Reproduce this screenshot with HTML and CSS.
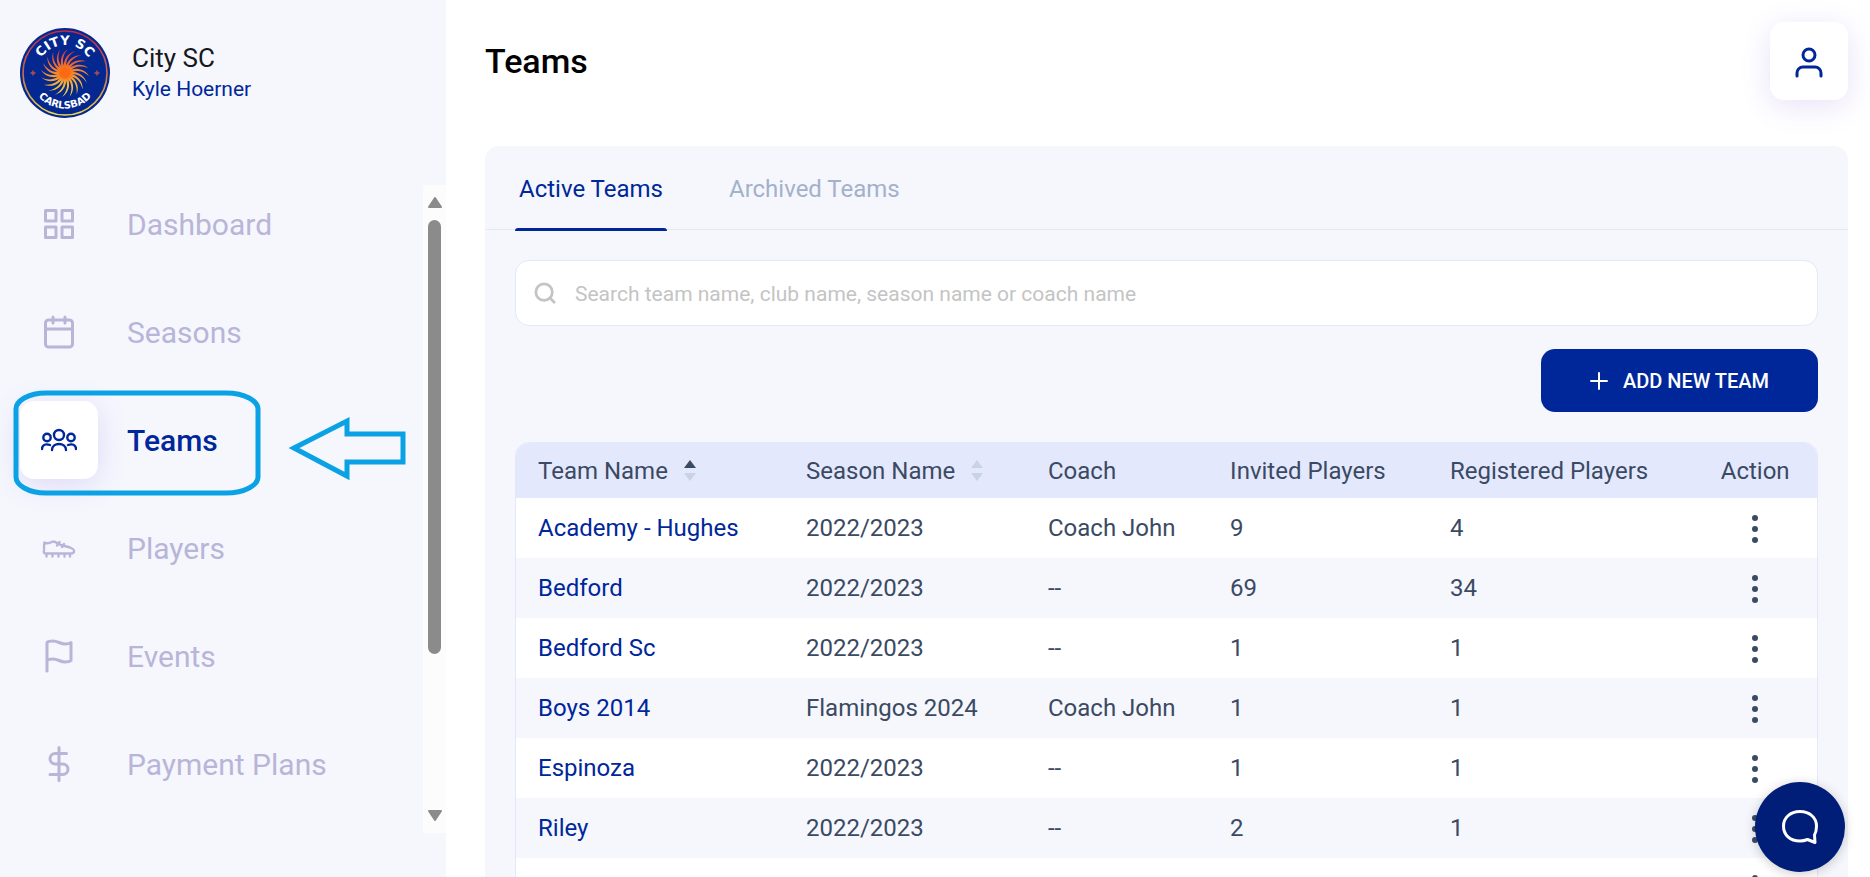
FILE: index.html
```html
<!DOCTYPE html>
<html lang="en">
<head>
    <meta charset="UTF-8">
    <meta name="viewport" content="width=device-width, initial-scale=1.0">
    <title>Teams</title>
    <link rel="stylesheet" href="styles.css">
</head>
<body>

<!-- Sidebar -->
<aside class="sidebar">
    <div class="club">
        <svg class="club-logo" viewBox="0 0 90 90" aria-hidden="true">
            <defs>
                <linearGradient id="ringColor" x1="0" y1="0" x2="0" y2="1">
                    <stop offset="0" stop-color="#c4283f"/>
                    <stop offset="0.5" stop-color="#cf6a4a"/>
                    <stop offset="1" stop-color="#f0dc45"/>
                </linearGradient>
                <linearGradient id="sunColor" x1="0" y1="0" x2="0" y2="1">
                    <stop offset="0" stop-color="#d8303f"/>
                    <stop offset="0.5" stop-color="#f58a2c"/>
                    <stop offset="1" stop-color="#f7e23e"/>
                </linearGradient>
                <radialGradient id="coreColor">
                    <stop offset="0" stop-color="#fb6a12"/>
                    <stop offset="0.5" stop-color="#fb6a12"/>
                    <stop offset="1" stop-color="#fb7a1c" stop-opacity="0"/>
                </radialGradient>
                <path id="ray" d="M-1.500 -2C-6 -9 -5 -19 3 -24C-2.500 -18 -4 -10 1 -4Z"/>
                <path id="topArc" d="M17 45A28 28 0 0 1 73 45"/>
                <path id="bottomArc" d="M9.500 45A35.500 35.500 0 0 0 80.500 45"/>
                <mask id="sunMask">
                    <g fill="#fff" transform="translate(45 45)">
                        <circle r="5"/>
                        <use href="#ray"/>
                        <use href="#ray" transform="rotate(18)"/>
                        <use href="#ray" transform="rotate(36)"/>
                        <use href="#ray" transform="rotate(54)"/>
                        <use href="#ray" transform="rotate(72)"/>
                        <use href="#ray" transform="rotate(90)"/>
                        <use href="#ray" transform="rotate(108)"/>
                        <use href="#ray" transform="rotate(126)"/>
                        <use href="#ray" transform="rotate(144)"/>
                        <use href="#ray" transform="rotate(162)"/>
                        <use href="#ray" transform="rotate(180)"/>
                        <use href="#ray" transform="rotate(198)"/>
                        <use href="#ray" transform="rotate(216)"/>
                        <use href="#ray" transform="rotate(234)"/>
                        <use href="#ray" transform="rotate(252)"/>
                        <use href="#ray" transform="rotate(270)"/>
                        <use href="#ray" transform="rotate(288)"/>
                        <use href="#ray" transform="rotate(306)"/>
                        <use href="#ray" transform="rotate(324)"/>
                        <use href="#ray" transform="rotate(342)"/>
                    </g>
                </mask>
            </defs>
            <circle cx="45" cy="45" r="45" fill="#04288f"/>
            <circle cx="45" cy="45" r="42" fill="none" stroke="url(#ringColor)" stroke-width="1.6"/>
            <rect x="21" y="21" width="48" height="48" fill="url(#sunColor)" mask="url(#sunMask)"/>
            <circle cx="45" cy="45" r="9" fill="url(#coreColor)"/>
            <path d="M13 42.500V47.500M10.500 45H15.500M77 42.500V47.500M74.500 45H79.500" stroke="#b4504f" stroke-width="1.400"/>
            <text class="logo-top"><textPath href="#topArc" startOffset="50%">CITY SC</textPath></text>
            <text class="logo-bottom"><textPath href="#bottomArc" startOffset="50%">CARLSBAD</textPath></text>
        </svg>
        <div>
            <div class="club-name">City SC</div>
            <div class="club-user">Kyle Hoerner</div>
        </div>
    </div>

    <div class="nav-wrap">
        <nav class="nav">
            <a href="#" class="nav-item">
                <span class="nav-icon">
                    <svg class="icon" viewBox="0 0 24 24"><rect x="3" y="3" width="7" height="7"/><rect x="14" y="3" width="7" height="7"/><rect x="14" y="14" width="7" height="7"/><rect x="3" y="14" width="7" height="7"/></svg>
                </span>
                Dashboard
            </a>
            <a href="#" class="nav-item">
                <span class="nav-icon">
                    <svg class="icon" viewBox="0 0 24 24"><rect x="3" y="4" width="18" height="18" rx="2"/><path d="M16 2v4M8 2v4M3 10h18"/></svg>
                </span>
                Seasons
            </a>
            <a href="#" class="nav-item active">
                <span class="nav-icon">
                    <svg class="icon icon-teams" viewBox="0 0 36 36"><circle cx="18" cy="13" r="5"/><circle cx="6" cy="15.500" r="3.700"/><circle cx="30" cy="15.500" r="3.700"/><path d="M11 28C11 20 25 20 25 28M1 27C1 22.500 5 21.500 9 23M35 27C35 22.500 31 21.500 27 23"/></svg>
                </span>
                Teams
                <svg class="callout" viewBox="0 0 394 106" aria-hidden="true"><path d="M33 3H213C232 3 245 11 245 19V87C245 95 232 103 213 103H33C15 103 3 95 3 87V19C3 11 15 3 33 3Z"/><path d="M281 58L334 31V44H390V72H334V86Z"/></svg>
            </a>
            <a href="#" class="nav-item">
                <span class="nav-icon">
                    <svg class="icon icon-boot" viewBox="0 0 36 36"><path d="M3.500 12.500C6 14.500 9 13 12 11.500C15 11.500 17 14 20 15L29 17.500C33 19 33.500 20 33 22C32 23.500 31 23.500 30 23.500H5C3 23.500 2.500 23 3 20C3.300 17.500 2.500 15 3.500 12.500ZM5.500 24V26.500M11.500 24V26.500M17.500 24V26.500M23.500 24V26.500M29 24V26.500M16 15.500L18.500 12M21 17L23 14"/></svg>
                </span>
                Players
            </a>
            <a href="#" class="nav-item">
                <span class="nav-icon">
                    <svg class="icon" viewBox="0 0 24 24"><path d="M4 15s1-1 4-1 5 2 8 2 4-1 4-1V3s-1 1-4 1-5-2-8-2-4 1-4 1zM4 22v-7"/></svg>
                </span>
                Events
            </a>
            <a href="#" class="nav-item">
                <span class="nav-icon">
                    <svg class="icon" viewBox="0 0 24 24"><path d="M12 1v22M17 5H9.500a3.500 3.500 0 0 0 0 7h5a3.500 3.500 0 0 1 0 7H6"/></svg>
                </span>
                Payment Plans
            </a>
        </nav>
        <div class="scrollbar">
            <svg class="scroll-arrow" viewBox="0 0 14 11"><path d="M7 1L13 10H1Z"/></svg>
            <div class="scroll-thumb"></div>
            <svg class="scroll-arrow" viewBox="0 0 14 11"><path d="M7 10L1 1H13Z"/></svg>
        </div>
    </div>
</aside>

<!-- Main content -->
<main class="main">
    <header class="topbar">
        <h1>Teams</h1>
        <button class="btn-profile" aria-label="Profile">
            <svg class="icon" viewBox="0 0 24 24"><path d="M20 22v-2a4 4 0 0 0-4-4H8a4 4 0 0 0-4 4v2"/><circle cx="12" cy="8" r="4"/></svg>
        </button>
    </header>

    <section class="panel">
        <div class="tabs">
            <button class="tab active">Active Teams</button>
            <button class="tab">Archived Teams</button>
        </div>

        <div class="panel-body">
            <div class="search">
                <svg class="icon-search" viewBox="0 0 24 24"><circle cx="11" cy="11" r="9"/><path d="M17.500 17.500L22 22"/></svg>
                <input type="text" aria-label="Search teams" placeholder="Search team name, club name, season name or coach name">
            </div>

            <button class="btn-add">
                <svg class="icon-plus" viewBox="0 0 18 18"><path d="M9 1V17M1 9H17"/></svg>
                ADD NEW TEAM
            </button>

            <table class="teams">
                <colgroup>
                    <col class="col-team">
                    <col class="col-season">
                    <col class="col-coach">
                    <col class="col-invited">
                    <col class="col-registered">
                    <col class="col-action">
                </colgroup>
                <thead>
                    <tr>
                        <th><span class="sortable">Team Name <svg class="sort sort-asc" viewBox="0 0 12 21"><path class="up" d="M6 0L12 8H0Z"/><path d="M6 21L0 13H12Z"/></svg></span></th>
                        <th><span class="sortable">Season Name <svg class="sort" viewBox="0 0 12 21"><path class="up" d="M6 0L12 8H0Z"/><path d="M6 21L0 13H12Z"/></svg></span></th>
                        <th>Coach</th>
                        <th>Invited Players</th>
                        <th>Registered Players</th>
                        <th class="action">Action</th>
                    </tr>
                </thead>
                <tbody>
                    <tr>
                        <td><a href="#">Academy - Hughes</a></td>
                        <td>2022/2023</td>
                        <td>Coach John</td>
                        <td>9</td>
                        <td>4</td>
                        <td class="action"><button class="btn-more" aria-label="More"><svg viewBox="0 0 6 28"><circle cx="3" cy="3" r="3"/><circle cx="3" cy="14" r="3"/><circle cx="3" cy="25" r="3"/></svg></button></td>
                    </tr>
                    <tr>
                        <td><a href="#">Bedford</a></td>
                        <td>2022/2023</td>
                        <td>--</td>
                        <td>69</td>
                        <td>34</td>
                        <td class="action"><button class="btn-more" aria-label="More"><svg viewBox="0 0 6 28"><circle cx="3" cy="3" r="3"/><circle cx="3" cy="14" r="3"/><circle cx="3" cy="25" r="3"/></svg></button></td>
                    </tr>
                    <tr>
                        <td><a href="#">Bedford Sc</a></td>
                        <td>2022/2023</td>
                        <td>--</td>
                        <td>1</td>
                        <td>1</td>
                        <td class="action"><button class="btn-more" aria-label="More"><svg viewBox="0 0 6 28"><circle cx="3" cy="3" r="3"/><circle cx="3" cy="14" r="3"/><circle cx="3" cy="25" r="3"/></svg></button></td>
                    </tr>
                    <tr>
                        <td><a href="#">Boys 2014</a></td>
                        <td>Flamingos 2024</td>
                        <td>Coach John</td>
                        <td>1</td>
                        <td>1</td>
                        <td class="action"><button class="btn-more" aria-label="More"><svg viewBox="0 0 6 28"><circle cx="3" cy="3" r="3"/><circle cx="3" cy="14" r="3"/><circle cx="3" cy="25" r="3"/></svg></button></td>
                    </tr>
                    <tr>
                        <td><a href="#">Espinoza</a></td>
                        <td>2022/2023</td>
                        <td>--</td>
                        <td>1</td>
                        <td>1</td>
                        <td class="action"><button class="btn-more" aria-label="More"><svg viewBox="0 0 6 28"><circle cx="3" cy="3" r="3"/><circle cx="3" cy="14" r="3"/><circle cx="3" cy="25" r="3"/></svg></button></td>
                    </tr>
                    <tr>
                        <td><a href="#">Riley</a></td>
                        <td>2022/2023</td>
                        <td>--</td>
                        <td>2</td>
                        <td>1</td>
                        <td class="action"><button class="btn-more" aria-label="More"><svg viewBox="0 0 6 28"><circle cx="3" cy="3" r="3"/><circle cx="3" cy="14" r="3"/><circle cx="3" cy="25" r="3"/></svg></button></td>
                    </tr>
                    <tr>
                        <td></td>
                        <td></td>
                        <td></td>
                        <td></td>
                        <td></td>
                        <td class="action"><button class="btn-more" aria-label="More"><svg viewBox="0 0 6 28"><circle cx="3" cy="3" r="3"/><circle cx="3" cy="14" r="3"/><circle cx="3" cy="25" r="3"/></svg></button></td>
                    </tr>
                </tbody>
            </table>
        </div>
    </section>
</main>

<!-- Chat bubble -->
<button class="btn-chat" aria-label="Chat">
    <svg viewBox="0 0 36 34"><path d="M18 1.500C8 1.500 1.500 8 1.500 16C1.500 25 8 31 18 31C21 31 23 30.500 25.500 29.500L33 32.500L32.500 25C34 22.500 34.500 19.500 34.500 16C34.500 8 28 1.500 18 1.500Z"/></svg>
</button>

</body>
</html>
```
FILE: styles.css
```css
* {
    box-sizing: border-box;
}

body {
    margin: 0;
    height: 100vh;
    display: flex;
    overflow: hidden;
    background: #fff;
    color: #3b4a63;
    font-family: Roboto, sans-serif;
    font-size: 24px;
}

button {
    border: none;
    background: none;
    padding: 0;
    font-family: inherit;
    cursor: pointer;
}

a {
    color: #00279a;
    text-decoration: none;
}

.icon {
    width: 36px;
    height: 36px;
    fill: none;
    stroke: currentColor;
    stroke-width: 2;
    stroke-linecap: round;
    stroke-linejoin: round;
}

/* Sidebar */
.sidebar {
    flex: 0 0 446px;
    background: #f5f7fd;
    padding-top: 28px;
}

.club {
    display: flex;
    align-items: center;
    gap: 22px;
    padding-left: 20px;
    margin-bottom: 67px;
}

.club-logo {
    width: 90px;
    height: 90px;
}

.logo-top,
.logo-bottom {
    fill: #fff;
    font-family: "DejaVu Sans", sans-serif;
    font-weight: bold;
    text-anchor: middle;
}

.logo-top {
    font-size: 13px;
}

.logo-bottom {
    font-size: 10px;
}

.club-name {
    color: #16181d;
    font-size: 26px;
    line-height: 32px;
}

.club-user {
    color: #00279a;
    font-size: 21px;
    line-height: 30px;
}

.nav-wrap {
    display: flex;
}

.nav {
    flex: 1;
    padding: 0 0 30px 20px;
    display: flex;
    flex-direction: column;
    gap: 30px;
}

.nav-item {
    position: relative;
    display: flex;
    align-items: center;
    gap: 29px;
    color: #b8b5d9;
    font-size: 30px;
}

.nav-icon {
    width: 78px;
    height: 78px;
    display: flex;
    align-items: center;
    justify-content: center;
}

.nav-item.active {
    color: #00279a;
    font-weight: 500;
}

.nav-item.active .nav-icon {
    background: #fff;
    border-radius: 14px;
    box-shadow: 0 6px 30px rgba(110, 70, 220, 0.16);
}

.icon-teams,
.icon-boot {
    stroke-width: 2.4;
}

/* Highlight drawn over the current item */
.callout {
    position: absolute;
    left: -7px;
    top: -11px;
    width: 394px;
    height: 106px;
    fill: none;
    stroke: #0aa2e5;
    stroke-width: 5;
}

.scrollbar {
    width: 23px;
    background: #fcfcfc;
    display: flex;
    flex-direction: column;
    align-items: center;
    padding: 12px 0;
}

.scroll-arrow {
    width: 14px;
    height: 11px;
    fill: #8b8b8b;
    stroke: #8b8b8b;
    stroke-width: 2;
    stroke-linejoin: round;
}

.scroll-thumb {
    width: 13px;
    height: 434px;
    margin: 12px 0 auto;
    border-radius: 7px;
    background: #8b8b8b;
}

/* Main */
.main {
    flex: 1;
    min-width: 0;
    padding: 22px 22px 0 39px;
}

.topbar {
    display: flex;
    align-items: center;
    justify-content: space-between;
    margin-bottom: 46px;
}

h1 {
    margin: 0;
    color: #000;
    font-size: 34px;
    font-weight: 500;
}

.btn-profile {
    width: 78px;
    height: 78px;
    display: flex;
    align-items: center;
    justify-content: center;
    color: #00279a;
    background: #fff;
    border-radius: 14px;
    box-shadow: 0 6px 30px rgba(110, 70, 220, 0.16);
}

.panel {
    background: #f5f7fd;
    border-radius: 14px;
}

.tabs {
    display: flex;
    gap: 58px;
    height: 84px;
    padding: 2px 30px 0;
    border-bottom: 1px solid #e4e8f7;
}

.tab {
    position: relative;
    padding: 0 4px;
    color: #a3b1cb;
    font-size: 24px;
}

.tab.active {
    color: #00279a;
}

.tab.active::after {
    content: "";
    position: absolute;
    left: 0;
    right: 0;
    bottom: -2px;
    height: 3px;
    border-radius: 3px 3px 0 0;
    background: #00279a;
}

.panel-body {
    padding: 30px;
    display: flex;
    flex-direction: column;
}

.search {
    display: flex;
    align-items: center;
    gap: 19px;
    height: 66px;
    padding: 0 18px;
    background: #fff;
    border: 1px solid #e4e8f7;
    border-radius: 14px;
}

.icon-search {
    width: 22px;
    height: 22px;
    fill: none;
    stroke: #c4c4c4;
    stroke-width: 3;
    stroke-linecap: round;
}

.search input {
    flex: 1;
    border: none;
    outline: none;
    padding: 2px 0 0;
    background: none;
    font-family: inherit;
    font-size: 21px;
}

.search input::placeholder {
    color: #c4c4c4;
}

.btn-add {
    align-self: flex-end;
    display: flex;
    align-items: center;
    justify-content: center;
    gap: 15px;
    width: 277px;
    height: 63px;
    margin: 23px 0 30px;
    border-radius: 14px;
    background: #00279a;
    color: #fff;
    font-size: 20px;
    font-weight: 500;
}

.icon-plus {
    width: 18px;
    height: 18px;
    stroke: #fff;
    stroke-width: 2;
    stroke-linecap: round;
}

/* Teams table */
.teams {
    width: 100%;
    table-layout: fixed;
    border-collapse: separate;
    border-spacing: 0;
    background: #fff;
    border: 1px solid #e4e8fd;
    border-radius: 14px 14px 0 0;
    overflow: hidden;
}

.col-team {
    width: 20.6%;
}

.col-season {
    width: 18.6%;
}

.col-coach {
    width: 14%;
}

.col-invited {
    width: 16.9%;
}

.col-registered {
    width: 20.4%;
}

.col-action {
    width: 9.5%;
}

th {
    height: 55px;
    padding: 0 0 0 22px;
    background: #e4e8fd;
    font-weight: 400;
    text-align: left;
    white-space: nowrap;
}

td {
    height: 60px;
    padding: 0 0 0 22px;
}

tbody tr:nth-child(even) {
    background: #f5f7fd;
}

th.action,
td.action {
    padding: 0;
    text-align: center;
}

.sortable {
    display: flex;
    align-items: center;
    gap: 16px;
}

.sort {
    width: 12px;
    height: 21px;
    fill: #c9d3e5;
}

.sort-asc .up {
    fill: #3b4a63;
}

.btn-more {
    vertical-align: middle;
}

.btn-more svg {
    display: block;
    width: 6px;
    height: 28px;
    fill: #3b4a63;
}

/* Chat */
.btn-chat {
    position: fixed;
    right: 25px;
    bottom: 5px;
    width: 90px;
    height: 90px;
    display: flex;
    align-items: center;
    justify-content: center;
    border-radius: 50%;
    background: #001e78;
    box-shadow: 0 2px 12px rgba(0, 0, 0, 0.2);
}

.btn-chat svg {
    width: 36px;
    height: 34px;
    fill: none;
    stroke: #fff;
    stroke-width: 3;
    stroke-linejoin: round;
}
```
